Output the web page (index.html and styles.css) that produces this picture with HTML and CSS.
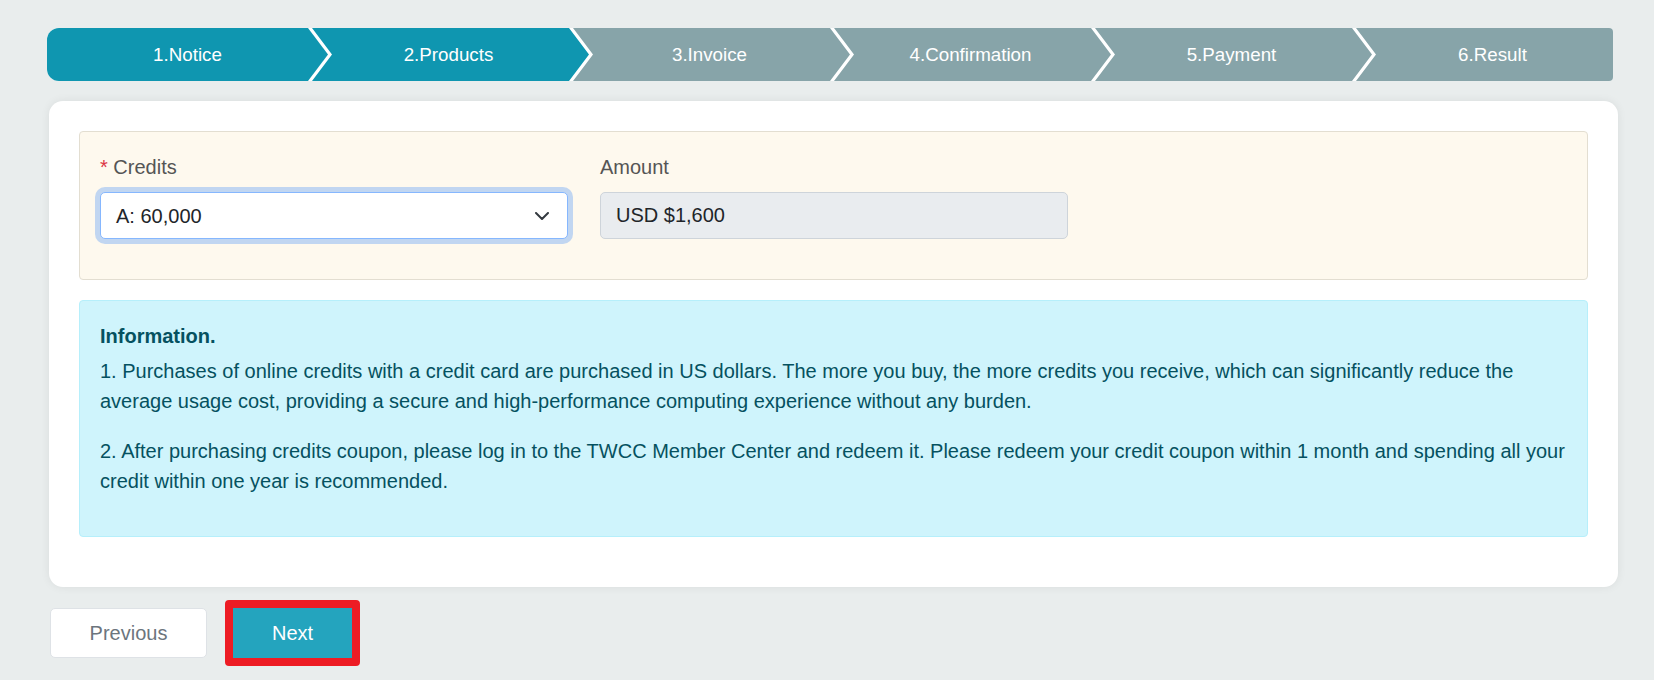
FILE: index.html
```html
<!DOCTYPE html>
<html lang="en">
<head>
<meta charset="utf-8">
<title>Products</title>
<link rel="stylesheet" href="styles.css">
</head>
<body>
<div class="page">
  <ol class="steps">
    <li class="step active first">1.Notice</li>
    <li class="step active">2.Products</li>
    <li class="step">3.Invoice</li>
    <li class="step">4.Confirmation</li>
    <li class="step">5.Payment</li>
    <li class="step last">6.Result</li>
  </ol>

  <div class="card">
    <div class="form-box">
      <div class="field">
        <label class="label"><span class="req">*</span> Credits</label>
        <div class="select">
          <span>A: 60,000</span>
          <svg class="caret" width="14" height="8" viewBox="0 0 14 8"><path d="M1 1l6 6 6-6" fill="none" stroke="#343a40" stroke-width="2" stroke-linecap="round" stroke-linejoin="round"/></svg>
        </div>
      </div>
      <div class="field">
        <label class="label">Amount</label>
        <div class="input readonly">USD $1,600</div>
      </div>
    </div>

    <div class="info-box">
      <div class="info-title">Information.</div>
      <p>1. Purchases of online credits with a credit card are purchased in US dollars. The more you buy, the more credits you receive, which can significantly reduce the average usage cost, providing a secure and high-performance computing experience without any burden.</p>
      <p>2. After purchasing credits coupon, please log in to the TWCC Member Center and redeem it. Please redeem your credit coupon within 1 month and spending all your credit within one year is recommended.</p>
    </div>
  </div>

  <div class="actions">
    <button class="btn btn-prev" type="button">Previous</button>
    <span class="highlight"><button class="btn btn-next" type="button">Next</button></span>
  </div>
</div>
</body>
</html>
```
FILE: styles.css
```css
* { box-sizing: border-box; }
html, body {
  margin: 0;
  padding: 0;
  background: #e9eded;
  font-family: "Liberation Sans", Arial, sans-serif;
  font-size: 20px;
  color: #212529;
}
.page {
  padding: 28px 0 0 47px;
  width: 1618px;
}

/* steps */
.steps {
  list-style: none;
  margin: 0 5px 0 0;
  padding: 0;
  display: grid;
  grid-template-columns: repeat(6, 1fr);
  height: 53px;
  background: #fff;
  border-radius: 12px 4px 4px 12px;
  overflow: hidden;
}
.step {
  margin-right: -20px;
  display: flex;
  align-items: center;
  justify-content: center;
  color: #fff;
  font-size: 18.75px;
  background: #87a4a9;
  clip-path: polygon(4px 0, calc(100% - 20px) 0, 100% 50%, calc(100% - 20px) 100%, 4px 100%, 24px 50%);
}
.step.active { background: #0f96b0; }
.step.first {
  clip-path: polygon(0 0, calc(100% - 20px) 0, 100% 50%, calc(100% - 20px) 100%, 0 100%);
}
.step.last {
  clip-path: polygon(4px 0, 100% 0, 100% 100%, 4px 100%, 24px 50%);
}

/* card */
.card {
  margin: 20px 0 0 2px;
  background: #fff;
  border-radius: 14px;
  padding: 30px 30px 30px;
  box-shadow: 0 0 10px rgba(0, 0, 0, 0.07);
}
.form-box {
  background: #fef9ee;
  border: 1px solid #e3ded1;
  border-radius: 4px;
  padding: 20px 20px 40px;
  display: grid;
  grid-template-columns: 468px 468px;
  column-gap: 32px;
  margin-bottom: 20px;
}
.field { display: flex; flex-direction: column; }
.label {
  line-height: 30px;
  margin-bottom: 10px;
  color: #555;
}
.req { color: #dc3545; }
.select {
  height: 47px;
  border: 1px solid #86b7fe;
  border-radius: 5px;
  box-shadow: 0 0 0 5px rgba(13, 110, 253, 0.25);
  background: #fff;
  display: flex;
  align-items: center;
  justify-content: space-between;
  padding: 0 18px 0 15px;
  line-height: 30px;
}
.caret { display: block; }
.input {
  height: 47px;
  border: 1px solid #ced4da;
  border-radius: 5px;
  display: flex;
  align-items: center;
  padding: 0 15px;
}
.readonly { background: #e9ecef; }

.info-box {
  background: #cff4fc;
  border: 1px solid #b6effb;
  border-radius: 4px;
  padding: 20px 20px 20px;
  color: #055160;
  line-height: 30px;
  margin-bottom: 20px;
}
.info-title {
  font-weight: bold;
  margin-bottom: 5px;
}
.info-box p { margin: 0 0 20px; }

/* actions */
.actions {
  display: flex;
  align-items: center;
  margin: 13px 0 0 3px;
}
.btn {
  font-family: inherit;
  font-size: 20px;
  height: 50px;
  line-height: 30px;
  cursor: pointer;
}
.btn-prev {
  width: 157px;
  background: #fff;
  color: #6c757d;
  border: 1px solid #dee2e6;
  border-radius: 5px;
}
.highlight {
  display: inline-flex;
  margin-left: 18px;
  border: 8px solid #ed1c24;
  border-radius: 4px;
}
.btn-next {
  width: 119px;
  background: #24a4be;
  color: #fff;
  border: 0;
  border-radius: 0;
}
```
